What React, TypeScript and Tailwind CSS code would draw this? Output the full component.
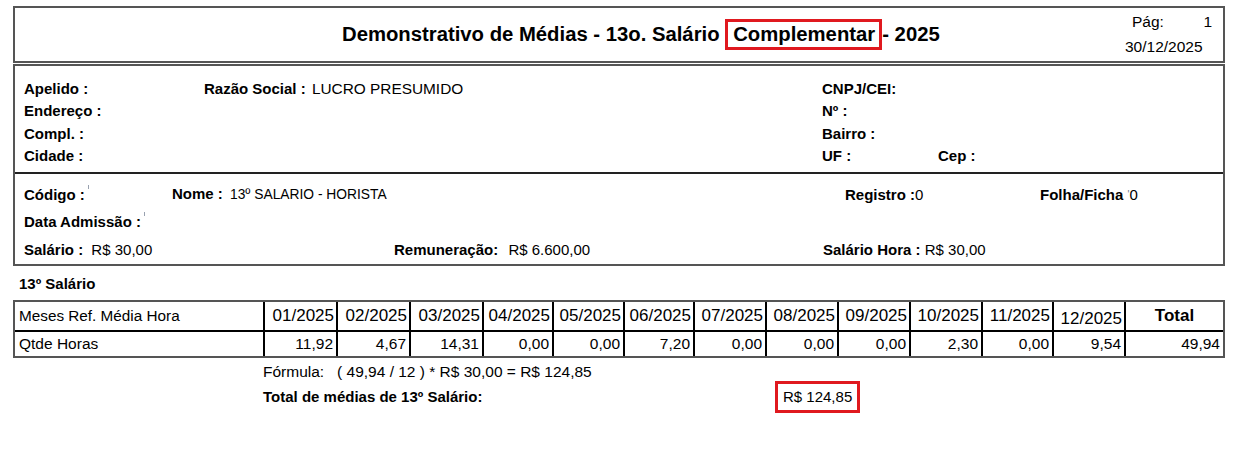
import React from "react";

const months = [
  { label: "01/2025", w: "w-[73px]", value: "11,92" },
  { label: "02/2025", w: "w-[73px]", value: "4,67" },
  { label: "03/2025", w: "w-[73px]", value: "14,31" },
  { label: "04/2025", w: "w-[70px]", value: "0,00" },
  { label: "05/2025", w: "w-[71px]", value: "0,00" },
  { label: "06/2025", w: "w-[70px]", value: "7,20" },
  { label: "07/2025", w: "w-[72px]", value: "0,00" },
  { label: "08/2025", w: "w-[72px]", value: "0,00" },
  { label: "09/2025", w: "w-[72px]", value: "0,00" },
  { label: "10/2025", w: "w-[72px]", value: "2,30" },
  { label: "11/2025", w: "w-[71px]", value: "0,00" },
  { label: "12/2025", w: "w-[72px]", value: "9,54" },
];

const Tick = () => <span className="inline-block w-[1px] h-[4px] bg-gray-400 align-top mt-[4px] ml-[3px]" />;

const App = () => {
  return (
    <div className="w-[1243px] h-[452px] bg-white text-black pl-[13px] pt-[6px] font-['Liberation_Sans',Arial,sans-serif]">
      {/* cabeçalho */}
      <div className="w-[1212px] h-[57px] border-2 border-[#555] flex items-stretch">
        <div className="flex-1 flex items-center pl-[327px] text-[20.3px] font-bold whitespace-nowrap leading-[23px]">
          <span>Demonstrativo de Médias - 13o. Salário&nbsp;</span>
          <span className="inline-block border-[3px] border-[#e0191f] pl-[5px] pr-[4px] py-[1px]">Complementar</span>
          <span>- 2025</span>
        </div>
        <div className="w-[102px] flex flex-col text-[15.5px] pt-[5px]">
          <div className="flex justify-between pl-[11px] pr-[11px] leading-[18px]">
            <span>Pág:</span>
            <span>1</span>
          </div>
          <div className="pl-[4px] mt-[7px] leading-[18px]">30/12/2025</div>
        </div>
      </div>

      {/* empresa + funcionário */}
      <div className="w-[1212px] mt-[1px] border-2 border-[#555]">
        <div className="h-[106px] pt-[12px] pl-[9px] text-[15px] leading-[22.4px]">
          <div className="flex">
            <span className="w-[180px] font-bold">Apelido :</span>
            <span className="w-[618px]">
              <b>Razão Social :</b> <span className="text-[15.4px] ml-[2px]">LUCRO PRESUMIDO</span>
            </span>
            <span className="font-bold">CNPJ/CEI:</span>
          </div>
          <div className="flex">
            <span className="w-[798px] font-bold">Endereço :</span>
            <span className="font-bold">Nº :</span>
          </div>
          <div className="flex">
            <span className="w-[798px] font-bold">Compl. :</span>
            <span className="font-bold">Bairro :</span>
          </div>
          <div className="flex">
            <span className="w-[798px] font-bold">Cidade :</span>
            <span className="w-[116px] font-bold">UF :</span>
            <span className="font-bold">Cep :</span>
          </div>
        </div>
        <div className="h-[92px] border-t-2 border-[#222] pt-[6px] pl-[9px] text-[15px] leading-[27.4px]">
          <div className="flex items-center">
            <span className="w-[148px] font-bold">Código :<Tick /></span>
            <span className="w-[673px]">
              <b>Nome :</b> <span className="text-[13.8px] ml-[3px]">13º SALARIO - HORISTA</span>
            </span>
            <span className="w-[195px]">
              <b>Registro :</b>0
            </span>
            <span>
              <b>Folha/Ficha</b> <span className="text-gray-500 text-[10px] align-top">'</span>0
            </span>
          </div>
          <div className="flex">
            <span className="font-bold">Data Admissão :<Tick /></span>
          </div>
          <div className="flex">
            <span className="w-[370px]">
              <b>Salário :</b> <span className="ml-[4px]">R$ 30,00</span>
            </span>
            <span className="w-[429px]">
              <b>Remuneração:</b> <span className="ml-[6px]">R$ 6.600,00</span>
            </span>
            <span>
              <b>Salário Hora :</b> R$ 30,00
            </span>
          </div>
        </div>
      </div>

      {/* 13º salário */}
      <div className="ml-[6px] mt-[9px] text-[15px] font-bold leading-[18px]">13º Salário</div>

      <div className="w-[1212px] mt-[7px] border-2 border-[#555]">
        <div className="flex h-[30px] border-b-2 border-black">
          <div className="w-[250px] border-r-2 border-black pl-[4px] text-[15.3px] flex items-center">Meses Ref. Média Hora</div>
          {months.map((m, i) => (
            <div
              key={m.label}
              className={`${m.w} border-r-2 border-black pr-[2px] text-[17px] flex justify-end ${i === 11 ? "items-start pt-[4px]" : "items-center"}`}
            >
              {m.label}
            </div>
          ))}
          <div className="flex-1 flex items-center justify-center text-[17px] font-bold">Total</div>
        </div>
        <div className="flex h-[24px]">
          <div className="w-[250px] border-r-2 border-black pl-[4px] text-[15.5px] flex items-center">Qtde Horas</div>
          {months.map((m) => (
            <div key={m.label} className={`${m.w} border-r-2 border-black pr-[3px] text-[15.5px] flex items-center justify-end`}>
              {m.value}
            </div>
          ))}
          <div className="flex-1 flex items-center justify-end pr-[3px] text-[15.5px]">49,94</div>
        </div>
      </div>

      <div className="ml-[250px] mt-[5px] text-[15.5px] leading-[18px] whitespace-pre">Fórmula:   ( 49,94 / 12 ) * R$ 30,00 = R$ 124,85</div>
      <div className="ml-[250px] mt-[0px] flex items-center">
        <span className="w-[512px] text-[15px] font-bold">Total de médias de 13º Salário:</span>
        <span className="h-[32px] border-[3px] border-[#e0191f] px-[5px] text-[15px] flex items-center">R$ 124,85</span>
      </div>
    </div>
  );
};

export default App;
